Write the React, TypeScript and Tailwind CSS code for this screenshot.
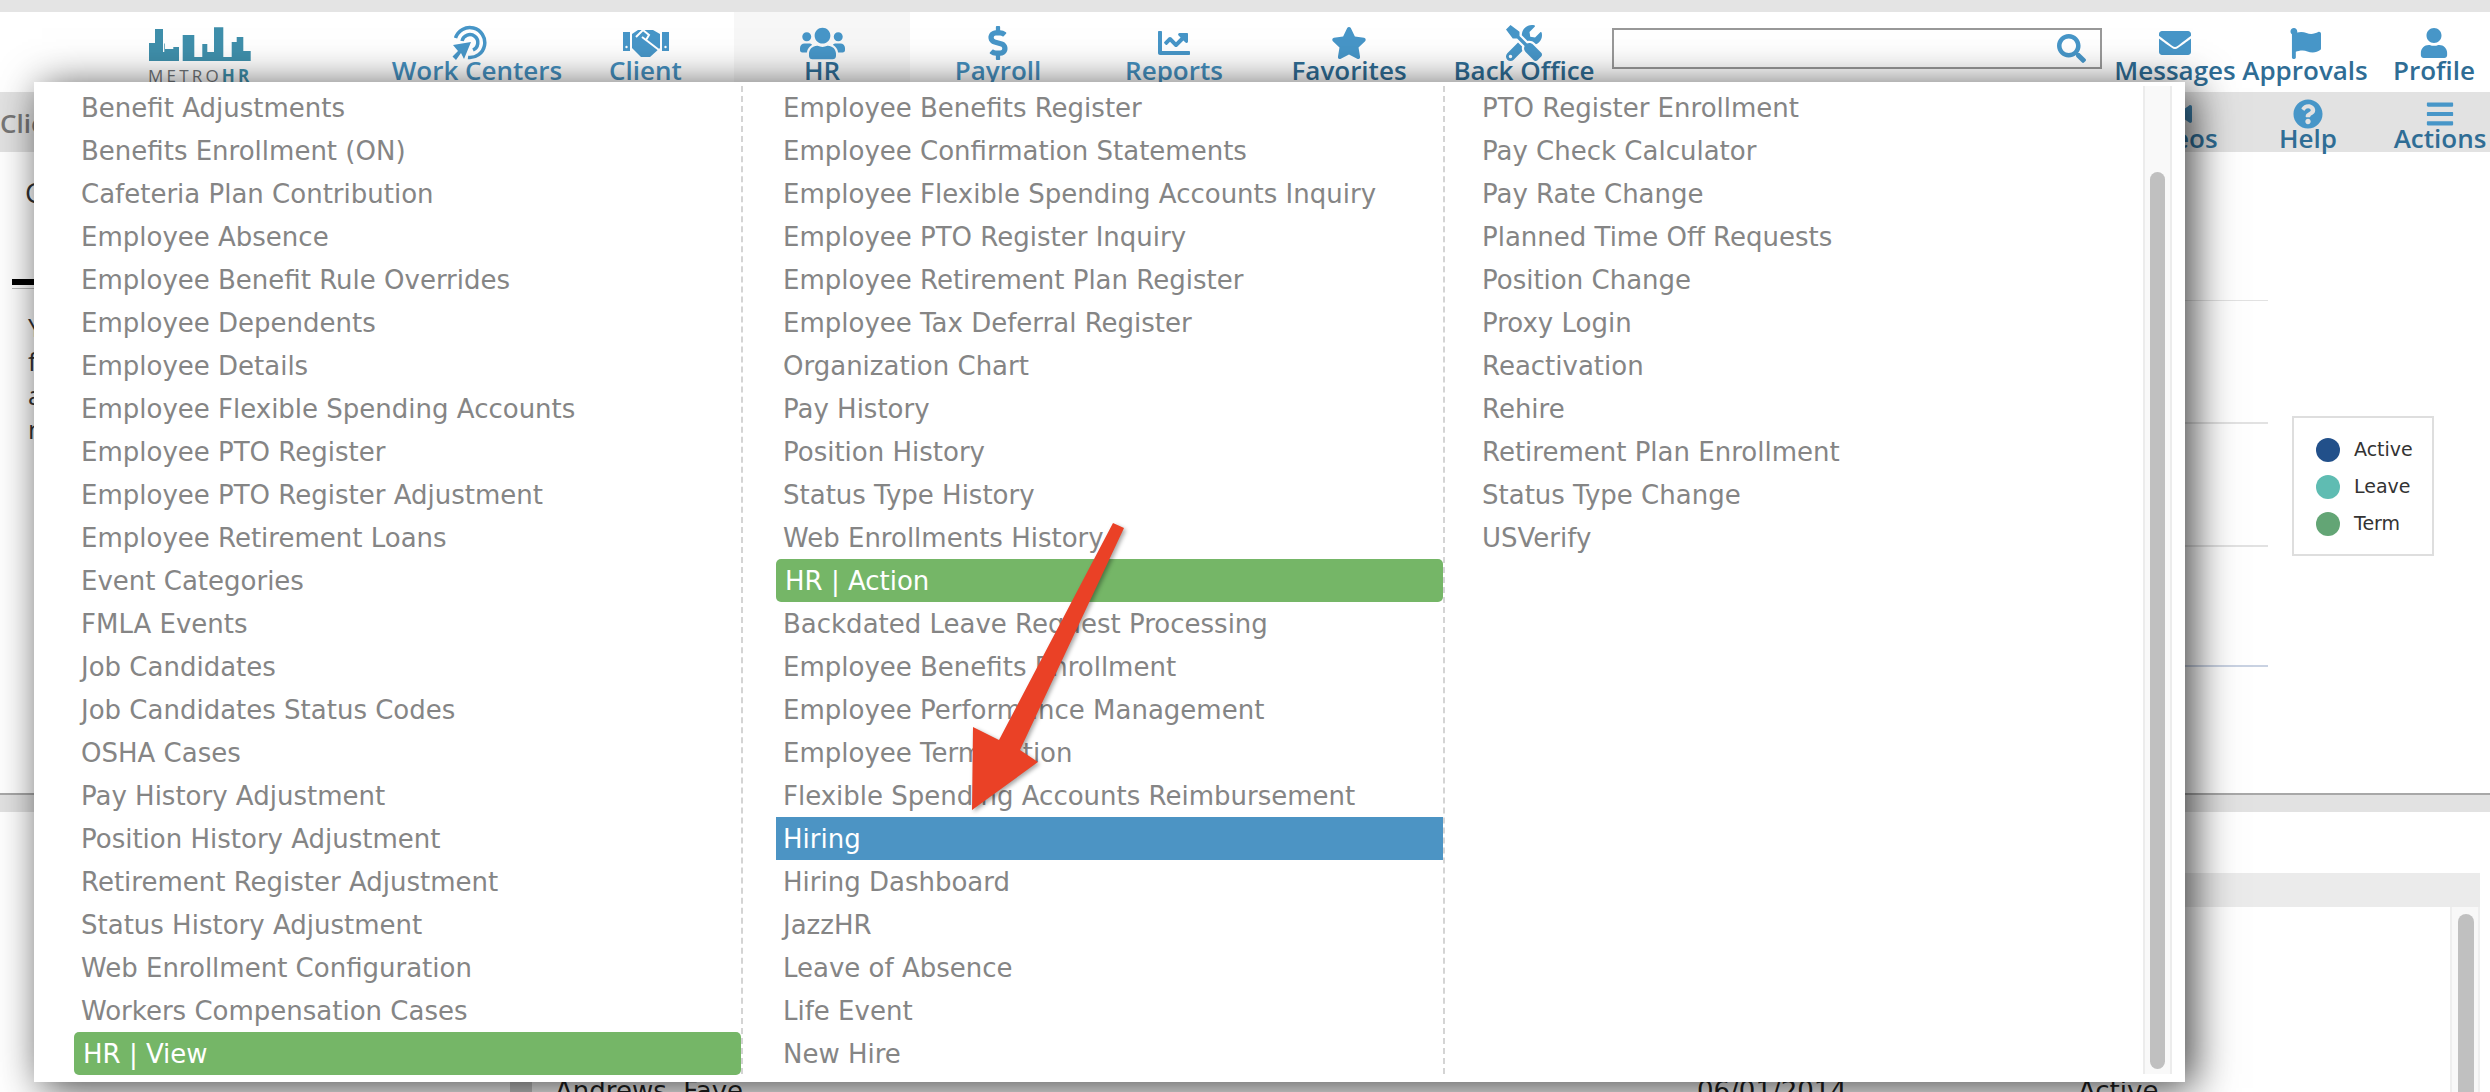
import { FaUsers, FaDollarSign, FaChartLine, FaStar, FaTools, FaSearch, FaEnvelope, FaFlag, FaUser, FaQuestionCircle, FaBars, FaVideo } from "react-icons/fa";
import type { ReactNode } from "react";

const colOne = [
  "Benefit Adjustments", "Benefits Enrollment (ON)", "Cafeteria Plan Contribution", "Employee Absence",
  "Employee Benefit Rule Overrides", "Employee Dependents", "Employee Details", "Employee Flexible Spending Accounts",
  "Employee PTO Register", "Employee PTO Register Adjustment", "Employee Retirement Loans", "Event Categories",
  "FMLA Events", "Job Candidates", "Job Candidates Status Codes", "OSHA Cases", "Pay History Adjustment",
  "Position History Adjustment", "Retirement Register Adjustment", "Status History Adjustment",
  "Web Enrollment Configuration", "Workers Compensation Cases", "#HR | View",
];

const colTwo = [
  "Employee Benefits Register", "Employee Confirmation Statements", "Employee Flexible Spending Accounts Inquiry",
  "Employee PTO Register Inquiry", "Employee Retirement Plan Register", "Employee Tax Deferral Register",
  "Organization Chart", "Pay History", "Position History", "Status Type History", "Web Enrollments History",
  "#HR | Action", "Backdated Leave Request Processing", "Employee Benefits Enrollment",
  "Employee Performance Management", "Employee Termination", "Flexible Spending Accounts Reimbursement",
  "*Hiring", "Hiring Dashboard", "JazzHR", "Leave of Absence", "Life Event", "New Hire",
];

const colThree = [
  "PTO Register Enrollment", "Pay Check Calculator", "Pay Rate Change", "Planned Time Off Requests", "Position Change",
  "Proxy Login", "Reactivation", "Rehire", "Retirement Plan Enrollment", "Status Type Change", "USVerify",
];

function MenuColumn({ items, className }: { items: string[]; className: string }) {
  return (
    <div className={className}>
      {items.map((item) => {
        if (item.startsWith("#")) {
          return (
            <div key={item} className="h-[43px] leading-[45px] pl-[9px] bg-[#75b667] text-white rounded-[5px]">
              {item.slice(1)}
            </div>
          );
        }
        if (item.startsWith("*")) {
          return (
            <div key={item} className="h-[43px] leading-[45px] pl-[7px] bg-[#4c94c4] text-white">
              {item.slice(1)}
            </div>
          );
        }
        return (
          <div key={item} className="h-[43px] leading-[45px] pl-[7px] text-[#858585]">
            {item}
          </div>
        );
      })}
    </div>
  );
}

function NavItem({ icon, label, className, dark }: { icon: ReactNode; label: string; className: string; dark?: boolean }) {
  return (
    <div className={`flex flex-col items-center pt-[15px] shrink-0 ${className}`}>
      <div className="h-[32px] flex items-center justify-center text-[#4796c8]">{icon}</div>
      <div className={`text-[26px] leading-[22px] font-semibold whitespace-nowrap ${dark ? "text-[#2f6d95]" : "text-[#4590bf]"}`}>{label}</div>
    </div>
  );
}

function TargetIcon() {
  return (
    <svg width="36" height="36" viewBox="0 0 36 36" fill="none" className="mr-[14px]">
      <path d="M3.5 13A15 15 0 1 1 16 32.5" stroke="#4796c8" strokeWidth="3.5" />
      <path d="M10 16A8 8 0 1 1 21 25" stroke="#4796c8" strokeWidth="3.5" />
      <polygon points="1,20 19,17 12,34 9,28 4,35 0.5,31.5 6,26" fill="#4796c8" />
    </svg>
  );
}

function HandshakeIcon() {
  return (
    <svg width="46" height="30" viewBox="0 0 46 30">
      <rect x="0" y="4" width="7" height="19" fill="#4796c8" />
      <rect x="39" y="4" width="7" height="19" fill="#4796c8" />
      <circle cx="3.5" cy="19" r="1.2" fill="#fff" />
      <circle cx="42.5" cy="19" r="1.2" fill="#fff" />
      <path d="M9 6L15 2H30L37 6V20L27 29H18L9 20Z" fill="#4796c8" />
      <path d="M13 9L20 2L26 7L23 12L19 9M23 12L36 22" fill="none" stroke="#fff" strokeWidth="2" />
    </svg>
  );
}

function Logo() {
  return (
    <div className="w-[392px] shrink-0 pl-[148px] pt-[15px]">
      <svg width="104" height="35" viewBox="0 0 104 35" className="block">
        <path
          d="M1 34V16H7V2H15V25H16.3V16.5H17V22H25.3V20H31V34H34.7V8H46.3V30H54.3V17H59.3V25H66V0.3H75.3V30H83.7V15H88.7V10H95.3V24H102.7V34Z"
          fill="#3f8fab"
        />
      </svg>
      <div className="text-[17px] leading-[20px] mt-[4px] tracking-[3.2px] text-[#6f7478] whitespace-nowrap">
        METRO<span className="font-bold text-[#3f8fab]">HR</span>
      </div>
    </div>
  );
}

export default function App() {
  return (
    <div className="relative w-[2490px] h-[1092px] overflow-hidden bg-white font-['Open_Sans',sans-serif]">
      <div className="h-[12px] bg-[#e4e4e4]" />

      <div className="h-[80px] flex bg-white">
        <Logo />
        <NavItem className="w-[170px]" label="Work Centers" icon={<TargetIcon />} />
        <NavItem className="w-[172px] pr-[5px]" label="Client" icon={<HandshakeIcon />} />
        <NavItem className="w-[176px] bg-[#f7f7f7]" dark label="HR" icon={<FaUsers size={45} />} />
        <NavItem className="w-[176px]" label="Payroll" icon={<FaDollarSign size={34} />} />
        <NavItem className="w-[176px]" label="Reports" icon={<FaChartLine size={32} />} />
        <NavItem className="w-[174px]" dark label="Favorites" icon={<FaStar size={36} />} />
        <NavItem className="w-[176px]" dark label="Back Office" icon={<FaTools size={36} />} />
        <div className="w-[490px] shrink-0 pt-[16px]">
          <div className="h-[41px] border-2 border-[#999999] flex items-center justify-end pr-[14px] text-[#4796c8]">
            <FaSearch size={29} />
          </div>
        </div>
        <NavItem className="w-[146px]" dark label="Messages" icon={<FaEnvelope size={32} />} />
        <NavItem className="w-[114px]" dark label="Approvals" icon={<FaFlag size={31} />} />
        <NavItem className="w-[128px] pl-[16px]" dark label="Profile" icon={<FaUser size={30} />} />
      </div>

      <div className="h-[60px] flex items-start bg-[#e2e2e2]">
        <div className="flex-1 pt-[14px] text-[26px] leading-[34px] font-semibold text-[#777777]">Clients</div>
        <div className="w-[92px] mr-[26px] flex flex-col items-center pt-[6px]">
          <div className="h-[32px] flex items-center text-[#3d7ea8]"><FaVideo size={32} /></div>
          <div className="text-[26px] leading-[16px] font-semibold text-[#2f6d95] whitespace-nowrap">Videos</div>
        </div>
        <div className="w-[120px] mr-[22px] flex flex-col items-center pt-[6px]">
          <div className="h-[32px] flex items-center text-[#4796c8]"><FaQuestionCircle size={30} /></div>
          <div className="text-[26px] leading-[16px] font-semibold text-[#2f6d95]">Help</div>
        </div>
        <div className="w-[100px] flex flex-col items-center pt-[6px]">
          <div className="h-[32px] flex items-center text-[#4796c8]"><FaBars size={30} /></div>
          <div className="text-[26px] leading-[16px] font-semibold text-[#2f6d95]">Actions</div>
        </div>
      </div>

      <div className="h-[641px] flex bg-white">
        <div className="w-[510px] pl-[12px] shrink-0 text-[#333333]">
          <div className="pl-[13px] pt-[22px] text-[28px] leading-[36px]">Clients</div>
          <div className="mt-[69px] h-[6px] bg-black" />
          <div className="mt-[3px] h-[1px] bg-[#bbbbbb]" />
          <div className="pl-[16px] pt-[21px] text-[26px] leading-[34px]">
            <div>You</div>
            <div>for</div>
            <div>and</div>
            <div>new</div>
          </div>
        </div>
        <div className="flex-1 flex">
          <div className="w-[1758px] pt-[148px] shrink-0 flex flex-col">
            <div className="h-[1px] bg-[#e2e2e2] mb-[121px]" />
            <div className="h-[2px] bg-[#e2e2e2] mb-[121px]" />
            <div className="h-[2px] bg-[#e2e2e2] mb-[118px]" />
            <div className="h-[2px] bg-[#c9d2e2]" />
          </div>
          <div className="pl-[24px] pt-[264px]">
            <div className="w-[142px] h-[140px] border-2 border-[#dedede] pl-[22px] pt-[13px] leading-[37px] text-[#333333] font-['DejaVu_Sans',sans-serif]">
              <div className="flex items-center gap-[14px]"><span className="w-[24px] h-[24px] rounded-full bg-[#22508a]" /><span className="text-[19px]">Active</span></div>
              <div className="flex items-center gap-[14px]"><span className="w-[24px] h-[24px] rounded-full bg-[#5fbcb2]" /><span className="text-[19px]">Leave</span></div>
              <div className="flex items-center gap-[14px]"><span className="w-[24px] h-[24px] rounded-full bg-[#63a575]" /><span className="text-[19px]">Term</span></div>
            </div>
          </div>
        </div>
      </div>

      <div className="h-[19px] bg-[#e2e2e2] border-t-2 border-[#a8a8a8]" />

      <div className="flex h-[280px] bg-white">
        <div className="w-[510px] shrink-0" />
        <div className="w-[22px] shrink-0 bg-[#cfcfcf]" />
        <div className="flex-1 pt-[61px] pr-[10px]">
          <div className="h-[34px] bg-[#ebebeb]" />
          <div className="flex h-[185px]">
            <div className="flex-1 flex text-[26px] text-[#222222] pt-[167px] leading-[34px] font-['DejaVu_Sans',sans-serif]">
              <div className="w-[1165px] pl-[23px]">Andrews, Faye</div>
              <div className="w-[381px]">06/01/2014</div>
              <div>Active</div>
            </div>
            <div className="w-[30px] border-x-2 border-[#eeeeee] bg-[#f8f8f8] pl-[6px] pt-[7px]">
              <div className="w-[16px] h-[178px] rounded-t-full bg-[#c0c0c0]" />
            </div>
          </div>
        </div>
      </div>

      <div className="absolute left-[34px] top-[82px] w-[2151px] h-[1000px] bg-white flex shadow-[8px_6px_40px_rgba(0,0,0,0.75)] pt-[4px] text-[26px] font-['DejaVu_Sans',sans-serif]">
        <MenuColumn items={colOne} className="w-[709px] pl-[40px] border-r-2 border-dashed border-[#d4d4d4] h-[988px]" />
        <MenuColumn items={colTwo} className="w-[702px] pl-[33px] border-r-2 border-dashed border-[#d4d4d4] h-[988px]" />
        <MenuColumn items={colThree} className="w-[698px] pl-[30px] h-[988px]" />
        <div className="w-[29px] h-[988px] border-x-2 border-[#ececec] bg-[#f9f9f9] px-[5px] pt-[86px]">
          <div className="h-[897px] rounded-[8px] bg-[#c0c0c0]" />
        </div>
      </div>

      <svg className="absolute left-[950px] top-[510px] drop-shadow-[2px_2px_2px_rgba(0,0,0,0.35)]" width="200" height="310" viewBox="950 510 200 310">
        <polygon points="1113,523 1124,528 1020,750 1038,762 972,810 973,727 999,740" fill="#ea4126" />
      </svg>
    </div>
  );
}
